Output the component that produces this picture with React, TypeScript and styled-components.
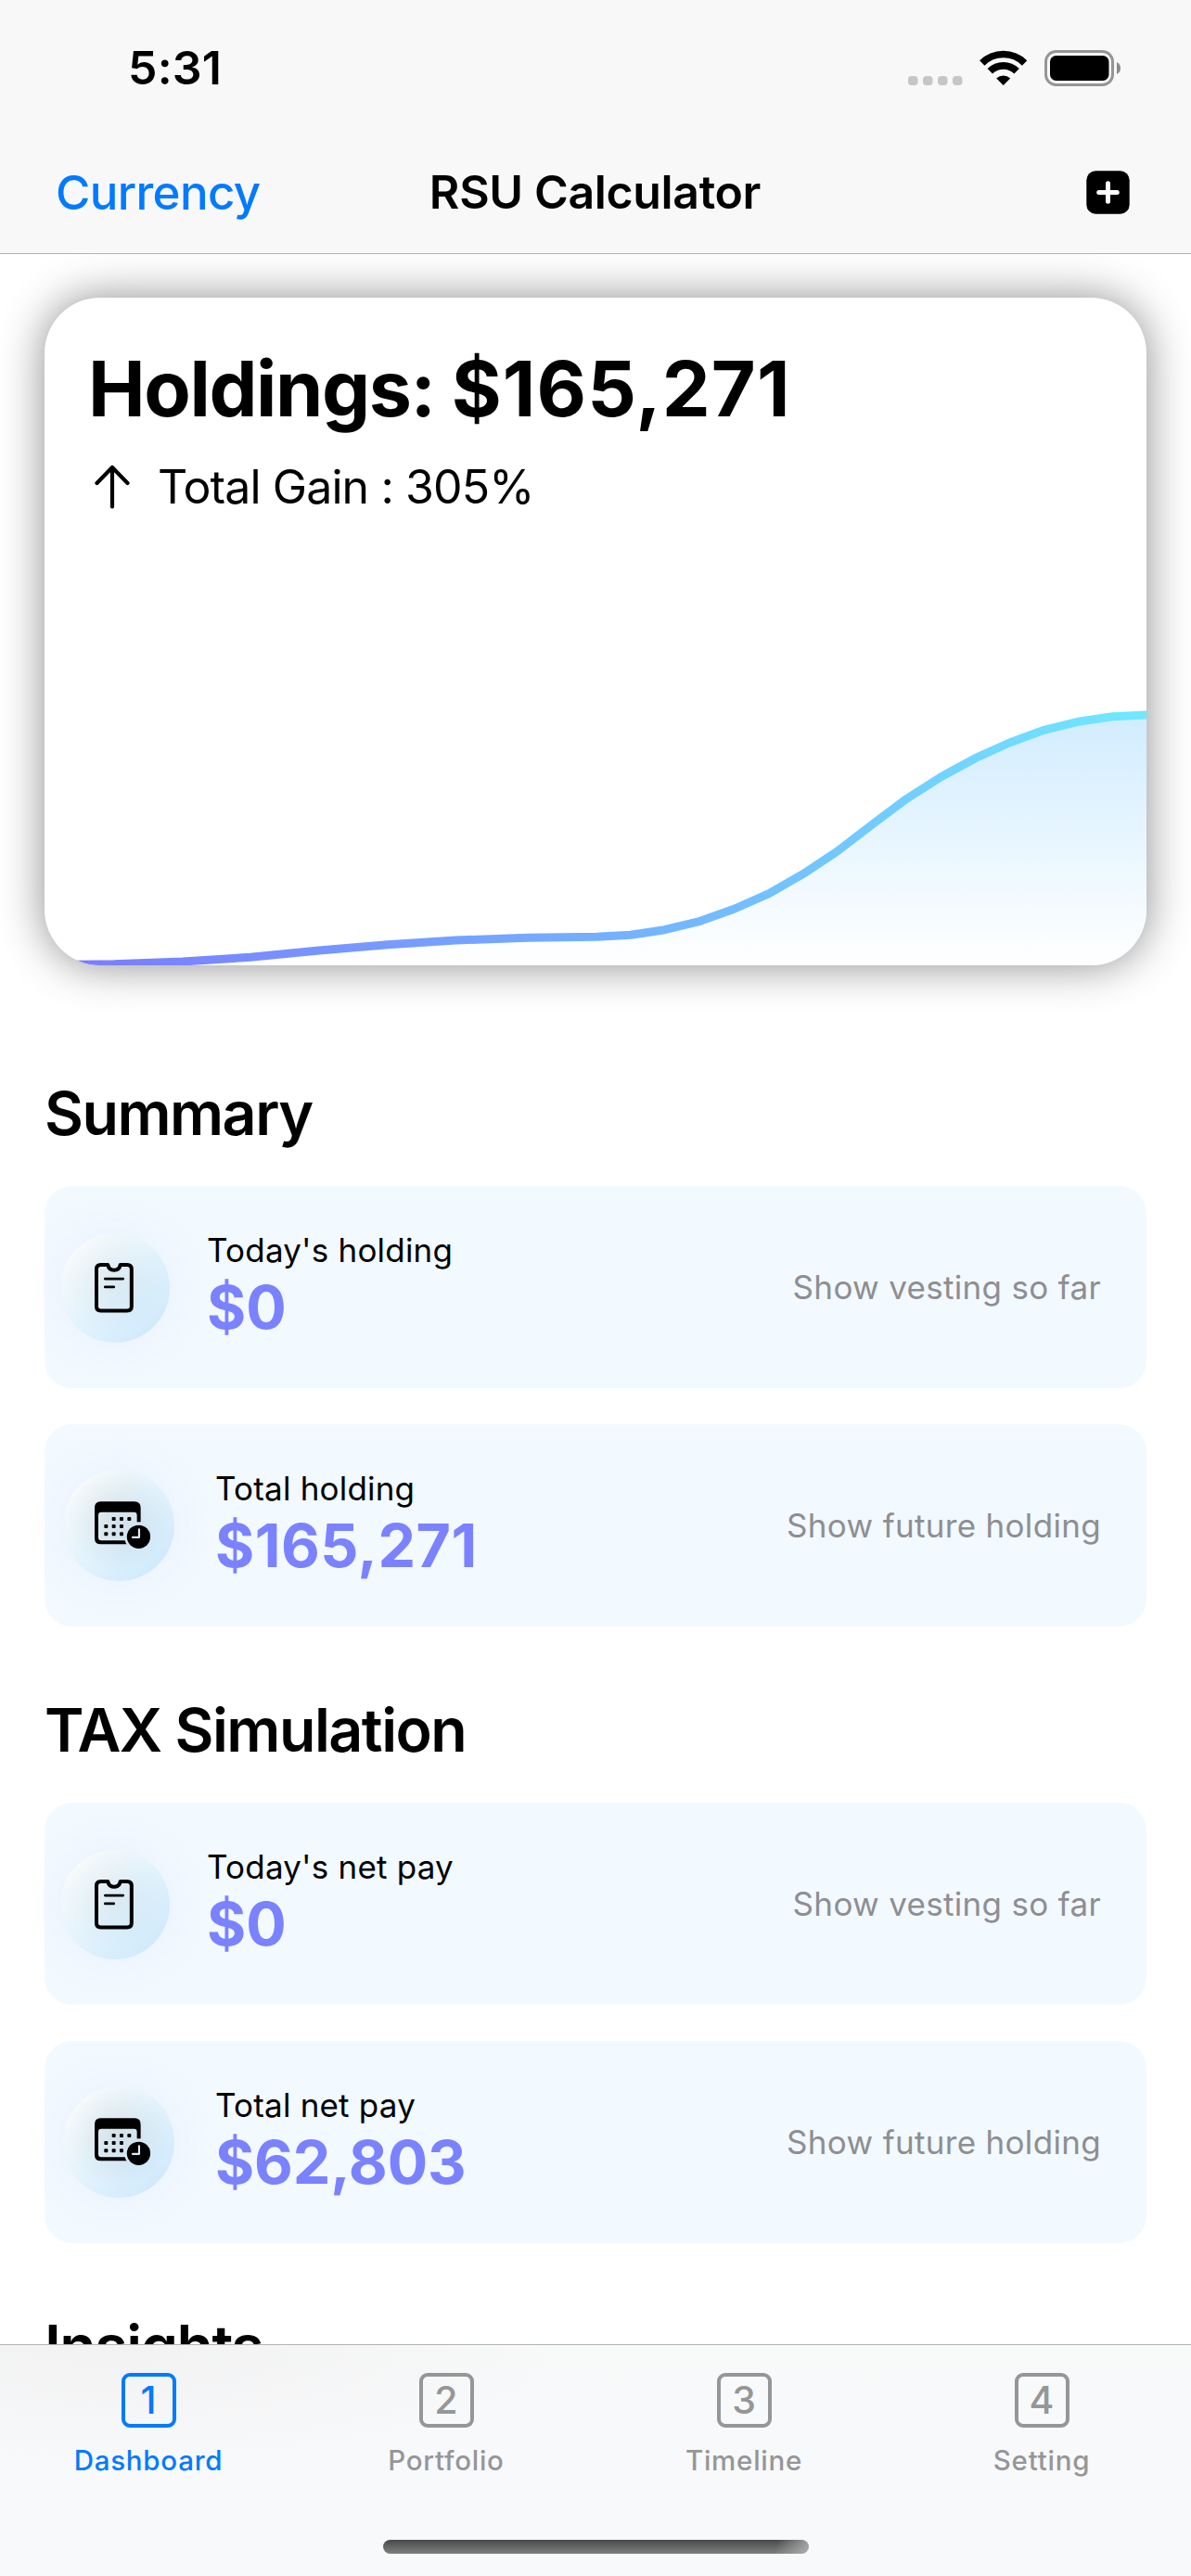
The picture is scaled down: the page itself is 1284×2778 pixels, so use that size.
import React from "react";
import styled, { createGlobalStyle } from "styled-components";

const GlobalStyle = createGlobalStyle`
  * { box-sizing: border-box; }
  html, body { margin: 0; padding: 0; background: #fff; }
  body { font-family: Inter, "Liberation Sans", sans-serif; color: #000; }
  h1, h2, p { margin: 0; }
  svg { display: block; flex: none; }
`;

const Screen = styled.div`
  width: 1284px;
  height: 2778px;
  display: flex;
  flex-direction: column;
  overflow: hidden;
  background: #fff;
`;

const Header = styled.header`
  flex: none;
  height: 274px;
  background: #f8f8f8;
  border-bottom: 1px solid #b1b1b1;
`;

const StatusBar = styled.div`
  height: 146px;
  display: flex;
  align-items: center;
  justify-content: space-between;
  padding: 0 76px 0 138px;
`;

const Clock = styled.span`
  font-size: 50px;
  font-weight: 600;
  letter-spacing: 0.2px;
`;

const StatusIcons = styled.div`
  display: flex;
  align-items: center;
`;

const NavBar = styled.nav`
  height: 122px;
  display: grid;
  grid-template-columns: 1fr auto 1fr;
  align-items: center;
  padding: 0 66px 0 60px;
`;

const NavLink = styled.span`
  justify-self: start;
  padding-top: 1px;
  font-size: 51px;
  font-weight: 550;
  letter-spacing: -0.65px;
  color: #007aff;
`;

const NavTitle = styled.h1`
  padding-left: 5px;
  font-size: 50px;
  font-weight: 600;
  letter-spacing: -0.35px;
`;

const AddButton = styled.button`
  justify-self: end;
  padding: 0;
  border: 0;
  background: none;
`;

const Content = styled.main`
  flex: 1;
  min-height: 0;
  overflow: hidden;
  padding: 47px 48px 0;
`;

const HoldingsCard = styled.section`
  height: 720px;
  display: flex;
  flex-direction: column;
  padding-top: 53px;
  border-radius: 60px;
  background: #fff;
  box-shadow: 0 0 48px rgba(0, 0, 12, 0.45);
  overflow: hidden;
`;

const HoldingsTitle = styled.h2`
  padding-left: 47px;
  font-size: 82.5px;
  line-height: 90px;
  font-weight: 700;
  letter-spacing: -1.4px;
  white-space: nowrap;
`;

const HoldingsAmount = styled.span`
  letter-spacing: 1.1px;
`;

const GainRow = styled.div`
  height: 60px;
  margin-top: 31px;
  padding-left: 53px;
  display: flex;
  align-items: center;
  gap: 29px;
  font-size: 50px;
  letter-spacing: -0.9px;
`;

const ChartSlot = styled.div`
  margin-top: auto;
`;

const Section = styled.section<{ $first?: boolean }>`
  margin-top: ${(p) => (p.$first ? 119 : 71)}px;
`;

const SectionTitle = styled.h2`
  padding-top: 1px;
  font-size: 64.5px;
  line-height: 80px;
  font-weight: 600;
  letter-spacing: -1.5px;
`;

const CardList = styled.div`
  margin-top: 38px;
  display: flex;
  flex-direction: column;
  gap: 39px;
`;

const Card = styled.article`
  height: 218px;
  display: flex;
  align-items: center;
  padding: 0 49px 0 17px;
  border-radius: 30px;
  background: #f2f9ff;
`;

const IconDisc = styled.div<{ $wide?: boolean }>`
  flex: none;
  width: ${(p) => (p.$wide ? 120 : 118)}px;
  height: ${(p) => (p.$wide ? 120 : 118)}px;
  margin: ${(p) => (p.$wide ? "0 44px 0 3px" : "2px 40px 0 0")};
  padding-left: ${(p) => (p.$wide ? 34 : 37)}px;
  display: flex;
  align-items: center;
  border-radius: 50%;
  background:
    radial-gradient(circle at 50% 45%, rgba(40, 60, 70, ${(p) => (p.$wide ? 0.1 : 0.05)}) 0%, rgba(40, 60, 70, 0) 62%),
    linear-gradient(135deg, #f8fbfb 10%, #e3f3fc 50%, #cce8fc 95%);
  box-shadow: 0 0 44px rgba(226, 235, 252, 0.6);
`;

const CardText = styled.div`
  flex: 1;
`;

const CardLabel = styled.p`
  font-size: 35px;
  line-height: 42px;
  padding-bottom: 2px;
  letter-spacing: 0.2px;
`;

const CardValue = styled.p<{ $tracking: number }>`
  font-size: 64.5px;
  line-height: 78px;
  font-weight: 700;
  letter-spacing: ${(p) => p.$tracking}px;
  color: #7b82ff;
`;

const CardHint = styled.span`
  font-size: 35px;
  letter-spacing: 0.32px;
  color: #8e8e93;
`;

const TabBar = styled.footer`
  flex: none;
  height: 250px;
  display: flex;
  flex-direction: column;
  border-top: 1px solid #b0b3b2;
  background:
    radial-gradient(ellipse 520px 130px at 120px 0, rgba(241, 241, 242, 0.9), rgba(241, 241, 242, 0) 100%),
    linear-gradient(#f8f9f9, #f8f9fb 50%, #f7f9fb);
`;

const Tabs = styled.div`
  flex: 1;
  display: grid;
  grid-template-columns: repeat(4, 1fr);
`;

const Tab = styled.div<{ $active?: boolean }>`
  display: flex;
  flex-direction: column;
  align-items: center;
  padding: 30px 1px 0 0;
  color: ${(p) => (p.$active ? "#007aff" : "#959697")};
`;

const TabNumber = styled.span`
  width: 59px;
  height: 59px;
  display: flex;
  align-items: center;
  justify-content: center;
  border: 4.5px solid currentColor;
  border-radius: 9px;
  font-size: 41px;
  line-height: 48px;
  padding-bottom: 1px;
  font-weight: 450;
`;

const TabLabel = styled.span`
  margin-top: 15px;
  font-size: 29.5px;
  line-height: 40px;
  font-weight: 500;
  letter-spacing: 0.75px;
`;

const HomeIndicator = styled.div`
  align-self: center;
  width: 459px;
  height: 15px;
  margin-bottom: 24px;
  border-radius: 8px;
  background:
    linear-gradient(100deg, rgba(190, 190, 190, 0) 92%, rgba(190, 190, 190, 0.75) 100%),
    linear-gradient(#484a4a, #7e7f7f);
`;

function StatusGlyphs() {
  return (
    <svg width="229" height="39" viewBox="979 53 229 39">
      {[979, 995, 1011, 1027].map((x) => (
        <rect key={x} x={x} y="81" width="10.5" height="10" rx="3.7" fill="#c6c6c6" />
      ))}
      <g fill="none" stroke="#000">
        <path d="M1058.8 67 A32.5 32.5 0 0 1 1104.6 67" strokeWidth="7.6" />
        <path d="M1067.3 75.8 A20.5 20.5 0 0 1 1096.1 75.8" strokeWidth="7.6" />
      </g>
      <path d="M1081.7 91 L1074.2 83.4 A11 11 0 0 1 1089.2 83.4 Z" />
      <rect x="1127.5" y="54.5" width="72" height="36" rx="11" fill="none" stroke="#959595" strokeWidth="3" />
      <rect x="1132" y="59" width="63.5" height="27" rx="6.5" />
      <path d="M1204 66 Q1208 68 1208 72.5 T1204 79 Z" fill="#8a8a8a" />
    </svg>
  );
}

function PlusIcon() {
  return (
    <svg width="47" height="47" viewBox="0 0 47 47">
      <rect x="0.3" y="0.3" width="46.4" height="46.4" rx="10" />
      <path d="M23.5 13.7V33.3M13.7 23.5H33.3" stroke="#fff" strokeWidth="5" strokeLinecap="round" />
    </svg>
  );
}

function ArrowUpIcon() {
  return (
    <svg width="40" height="48" viewBox="0 0 40 48">
      <path d="M20 3V45.5M3.5 20L20 3L36.5 20" fill="none" stroke="#000" strokeWidth="4.2" strokeLinecap="round" strokeLinejoin="round" />
    </svg>
  );
}

function ClipIcon() {
  return (
    <svg width="42" height="53.5" viewBox="66 95 126 160">
      <g fill="none" stroke="#000" strokeLinecap="round" strokeLinejoin="round">
        <path
          d="M86 101H109C111 112 118 118 129 118S147 112 149 101H171Q185.500 101 185.500 115V235Q185.500 249 171 249H86Q72 249 72 235V115Q72 101 86 101Z"
          strokeWidth="12"
        />
        <path d="M100 146H158M100 172.500H128" strokeWidth="8.500" />
      </g>
    </svg>
  );
}

const calendarDots = [
  [128, 147], [153, 147], [178, 147],
  [103, 171], [128, 171], [153, 171],
  [103, 195.5], [128, 195.5], [153, 195.5],
];

function CalendarClockIcon({ id }: { id: string }) {
  return (
    <svg width="60.300" height="51.300" viewBox="66 90 181 154">
      <mask id={id} maskUnits="userSpaceOnUse" x="60" y="85" width="190" height="165">
        <rect x="60" y="85" width="190" height="165" fill="#fff" />
        <circle cx="208.500" cy="205" r="46" fill="#000" />
        <rect x="200" y="157" width="20" height="20" fill="#000" />
      </mask>
      <g mask={`url(#${id})`}>
        <path
          fillRule="evenodd"
          d="M86 91H195Q215 91 215 111V209Q215 229 195 229H86Q66 229 66 209V111Q66 91 86 91ZM88 125Q78 125 78 135V207Q78 217 88 217H193Q203 217 203 207V135Q203 125 193 125Z"
        />
        {calendarDots.map(([x, y]) => (
          <rect key={`${x}-${y}`} x={x - 6} y={y - 6} width="12" height="12" rx="3" />
        ))}
      </g>
      <circle cx="208.500" cy="205" r="38" />
      <path d="M210 181V206.500H189" fill="none" stroke="#dcebf5" strokeWidth="6.500" strokeLinecap="round" strokeLinejoin="round" />
    </svg>
  );
}

const curve: [number, number][] = [
  [48, 1040.5], [123, 1039.7], [197, 1037], [270, 1032.3], [344, 1025], [418, 1018.7],
  [491, 1014], [569, 1011.2], [643, 1010.3], [680, 1008.3], [716.5, 1002.7], [755, 993.3],
  [792, 980], [829, 963.7], [865.5, 942.7], [902.4, 918.3], [939.2, 890], [977, 861.7],
  [1014.6, 837.7], [1051.4, 817.7], [1088.3, 801], [1124.3, 787.7], [1162, 778.3],
  [1199.6, 772.7], [1240, 770.7],
];

function HoldingsChart() {
  const points = curve.map(([x, y]) => `${x - 48},${y - 751}`).join(" ");
  return (
    <svg width="1188" height="290" viewBox="0 0 1188 290">
      <defs>
        <linearGradient id="line" x1="0" x2="1188" y1="0" y2="0" gradientUnits="userSpaceOnUse">
          <stop offset="0" stopColor="#7b79ff" />
          <stop offset="0.520" stopColor="#74b1ff" />
          <stop offset="1" stopColor="#70e8ff" />
        </linearGradient>
        <linearGradient id="area" x1="0" x2="0" y1="20" y2="290" gradientUnits="userSpaceOnUse">
          <stop offset="0" stopColor="#d1ecff" />
          <stop offset="1" stopColor="#ffffff" />
        </linearGradient>
      </defs>
      <polygon points={`${points} 1192,290 0,290`} fill="url(#area)" />
      <polyline points={points} fill="none" stroke="url(#line)" strokeWidth="9" strokeLinejoin="round" />
    </svg>
  );
}

interface Amount {
  label: string;
  value: string;
  tracking?: number;
}

interface Pair {
  title: string;
  first?: boolean;
  today: Amount;
  total: Amount;
}

function AmountText({ label, value, tracking = 0 }: Amount) {
  return (
    <CardText>
      <CardLabel>{label}</CardLabel>
      <CardValue $tracking={tracking}>{value}</CardValue>
    </CardText>
  );
}

function SummarySection({ title, first, today, total }: Pair) {
  return (
    <Section $first={first}>
      <SectionTitle>{title}</SectionTitle>
      <CardList>
        <Card>
          <IconDisc>
            <ClipIcon />
          </IconDisc>
          <AmountText {...today} />
          <CardHint>Show vesting so far</CardHint>
        </Card>
        <Card>
          <IconDisc $wide>
            <CalendarClockIcon id={first ? "cal-holding" : "cal-pay"} />
          </IconDisc>
          <AmountText {...total} />
          <CardHint>Show future holding</CardHint>
        </Card>
      </CardList>
    </Section>
  );
}

const tabs = ["Dashboard", "Portfolio", "Timeline", "Setting"];

export default function App() {
  return (
    <>
      <GlobalStyle />
      <Screen>
        <Header>
          <StatusBar>
            <Clock>5:31</Clock>
            <StatusIcons>
              <StatusGlyphs />
            </StatusIcons>
          </StatusBar>
          <NavBar>
            <NavLink>Currency</NavLink>
            <NavTitle>RSU Calculator</NavTitle>
            <AddButton aria-label="Add">
              <PlusIcon />
            </AddButton>
          </NavBar>
        </Header>
        <Content>
          <HoldingsCard>
            <HoldingsTitle>
              Holdings: <HoldingsAmount>$165,271</HoldingsAmount>
            </HoldingsTitle>
            <GainRow>
              <ArrowUpIcon />
              <span>Total Gain : 305%</span>
            </GainRow>
            <ChartSlot>
              <HoldingsChart />
            </ChartSlot>
          </HoldingsCard>
          <SummarySection
            first
            title="Summary"
            today={{ label: "Today's holding", value: "$0" }}
            total={{ label: "Total holding", value: "$165,271", tracking: 0.45 }}
          />
          <SummarySection
            title="TAX Simulation"
            today={{ label: "Today's net pay", value: "$0" }}
            total={{ label: "Total net pay", value: "$62,803", tracking: -0.15 }}
          />
          <Section>
            <SectionTitle>Insights</SectionTitle>
          </Section>
        </Content>
        <TabBar>
          <Tabs>
            {tabs.map((name, i) => (
              <Tab key={name} $active={i === 0}>
                <TabNumber>{i + 1}</TabNumber>
                <TabLabel>{name}</TabLabel>
              </Tab>
            ))}
          </Tabs>
          <HomeIndicator />
        </TabBar>
      </Screen>
    </>
  );
}
